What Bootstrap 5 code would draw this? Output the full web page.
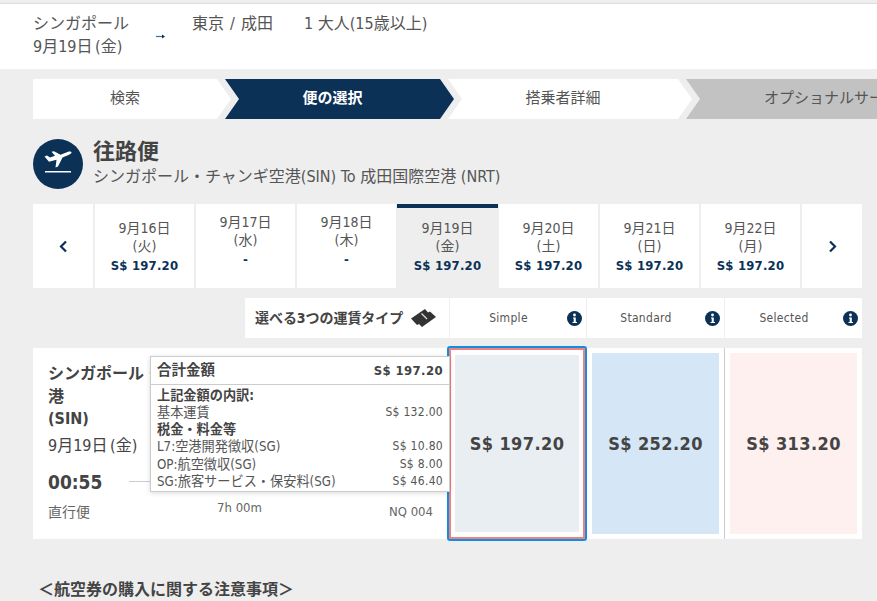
<!DOCTYPE html>
<html lang="ja">
<head>
<meta charset="utf-8">
<title>便の選択</title>
<link href="https://cdn.jsdelivr.net/npm/bootstrap@5.3.0/dist/css/bootstrap.min.css" rel="stylesheet">
<style>
html,body{height:601px;overflow:hidden}
body{background:#eee;color:#444;font-family:"DejaVu Sans Condensed","Noto Sans CJK JP",sans-serif;font-size:14px;width:877px}
.ff-top{height:66px;margin-top:3px;border-top:1px solid #ddd;background:#fff;padding:8px 0 0 33px;font-size:16px;color:#555;line-height:23px}
.ff-top-origin{width:122px;word-spacing:-2px}
.ff-top-arrow{width:37px;padding-top:12px;padding-left:1px}
.ff-top-dest{width:112px;word-spacing:1.500px}
.ff-clip{width:877px;overflow:hidden}
.ff-steps{margin:10px 0 0 33px;height:40px;width:850px}
.ff-step{height:40px;line-height:39px;background:#fff;text-align:center;font-size:15px;color:#555;flex:none;padding-right:14px}
.ff-s1{width:198px;clip-path:polygon(0 0,184px 0,198px 50%,184px 100%,0 100%)}
.ff-s2{width:229px;margin-left:-6px;background:#0b3157;color:#fff;font-weight:700;clip-path:polygon(0 0,215px 0,229px 50%,215px 100%,0 100%,14px 50%)}
.ff-s3{width:244px;margin-left:-6px;clip-path:polygon(0 0,230px 0,244px 50%,230px 100%,0 100%,14px 50%)}
.ff-s4{width:191px;margin-left:-6px;background:#c2c2c2;text-align:left;padding-left:78px;padding-right:0;white-space:nowrap;overflow:hidden;clip-path:polygon(0 0,100% 0,100% 100%,0 100%,14px 50%)}
.ff-head{margin:20px 0 0 33px;height:50px}
.ff-circle{width:50px;height:50px;border-radius:50%;background:#0b3157;flex:none;margin-right:10px}
.ff-title{font-size:22px;font-weight:700;line-height:26px;color:#444}
.ff-sub{font-size:16px;line-height:24px;color:#555}
.ff-dates{margin:15px 15px 0 33px;height:84px;gap:2px}
.ff-date{flex:0 0 99px;background:#fff;text-align:center;line-height:18px;color:#555;padding-top:15px}
.ff-date.ff-empty{padding-top:9px}
.ff-date.ff-active{flex:0 0 101px;margin:0 -1px;background:#eee;border-top:4px solid #0b3157;padding-top:11px}
.ff-nav{flex:0 0 60px;background:#fff}
.ff-price{color:#0b3157;font-weight:700;line-height:20px;margin-top:1px;letter-spacing:.2px;font-size:13px}
.ff-fares{margin:10px 15px 0 245px;height:40px;background:#fff}
.ff-fares-label{flex:0 0 204px;padding-left:10px;font-weight:700;font-size:14px;color:#444;white-space:nowrap;letter-spacing:-.05px}
.ff-fare-col{flex:0 0 138px;border-left:1px solid #eee;font-size:12px;color:#555;letter-spacing:.3px}
.ff-fare-first{flex:0 0 137px}
.ff-fare-col span{flex:1;text-align:center}
.ff-fare-col svg{margin-right:4px;flex:none}
.ff-flight{margin:10px 15px 0 33px;height:191px;background:#fff}
.ff-info{flex:0 0 414px;padding:15px 0 0 15px;position:relative}
.ff-name{width:200px;font-size:16px;font-weight:700;line-height:22.500px;color:#444}
.ff-when{font-size:16px;line-height:20px;margin-top:5px;color:#444;word-spacing:-2px}
.ff-time{font-size:19px;font-weight:700;line-height:26px;margin-top:13px;color:#444}
.ff-line{width:60px;height:1px;background:#ccc;margin:25px 0 0 27px}
.ff-meta{margin-top:7px;color:#666;font-size:14px;width:385px}
.ff-meta span:nth-child(2){margin-top:-4px;font-size:13px}
.ff-meta span:nth-child(3){font-size:13px}
.ff-sel{flex:0 0 140px;margin:-2px 0;border:2px solid #0d8fe8;border-radius:3px;position:relative;z-index:2;background:#fff}
.ff-sel-in{border:2px solid #f57f79;height:100%;padding:5px 4px}
.ff-box{height:100%;font-size:18px;font-weight:700;color:#444;letter-spacing:.4px}
.ff-box-a{background:#e9eef3}
.ff-box-b{background:#d5e6f6}
.ff-box-c{background:#fef0ef}
.ff-col{flex:0 0 137px;padding:5px}
.ff-col-last{flex:0 0 138px;border-left:1px solid #ccc}
.ff-tip{position:absolute;left:117px;top:8px;width:300px;height:136px;background:#fff;border:1px solid #ccc;box-shadow:0 1px 5px rgba(0,0,0,.15);z-index:3;font-size:13.200px;color:#555}
.ff-tip-top{height:28px;padding:1px 6px 0;border-bottom:1px solid #ccc;font-weight:700;color:#444;font-size:14.500px}
.ff-tip-top span:last-child{font-size:13px;letter-spacing:.4px}
.ff-tip-row{padding:0 6px;line-height:17.300px;white-space:nowrap}
.ff-tip-row span:last-child{font-size:12px;letter-spacing:.3px}
.ff-tip-head{color:#444;font-weight:700}
.ff-tip-rows{padding-top:1.500px}
.ff-notes{margin:39px 0 0 38px;font-size:16px;font-weight:700;color:#444;line-height:24px}
</style>
</head>
<body>
<div class="ff-top d-flex">
  <div class="ff-top-origin">シンガポール<br>9月19日 (金)</div>
  <div class="ff-top-arrow"><svg width="9" height="5" viewBox="0 0 9 5" aria-hidden="true"><path d="M0 2.500H6" stroke="#3a6ea5" stroke-width="1.200"/><path d="M6 .5 9 2.500 6 4.500Z" fill="#0b3157"/></svg></div>
  <div class="ff-top-dest">東京 / 成田</div>
  <div>1 大人(15歳以上)</div>
</div>

<div class="ff-clip">
<div class="ff-steps d-flex">
  <div class="ff-step ff-s1">検索</div>
  <div class="ff-step ff-s2">便の選択</div>
  <div class="ff-step ff-s3">搭乗者詳細</div>
  <div class="ff-step ff-s4">オプショナルサービス</div>
</div>
</div>

<div class="ff-head d-flex align-items-center">
  <div class="ff-circle d-flex align-items-center justify-content-center">
    <svg width="30" height="30" viewBox="0 0 30 30" aria-hidden="true"><path d="M1.500 7.500 4 6.500 7 8.500 12 6.800 8.500 2.800 11 2.300 17.500 5.800 24.500 3C26.800 2.200 28.500 2.700 28.500 3.600 28.500 4.400 27.500 5.200 25.500 6L19.500 8.500 15 17.500 12.500 18.500 13.500 10.800 6 12.800Z" fill="#fff"/><rect x="2" y="22" width="26" height="1.500" fill="#fff"/></svg>
  </div>
  <div>
    <div class="ff-title">往路便</div>
    <div class="ff-sub">シンガポール・チャンギ空港(SIN) To 成田国際空港 (NRT)</div>
  </div>
</div>

<div class="ff-dates d-flex">
  <div class="ff-nav d-flex align-items-center justify-content-center"><svg width="9" height="13" viewBox="0 0 9 13" aria-hidden="true"><path d="M7 1.500 2 6.500 7 11.500" fill="none" stroke="#0b3157" stroke-width="2.200"/></svg></div>
  <div class="ff-date">9月16日<br>(火)<div class="ff-price">S$ 197.20</div></div>
  <div class="ff-date ff-empty">9月17日<br>(水)<div class="ff-price">-</div></div>
  <div class="ff-date ff-empty">9月18日<br>(木)<div class="ff-price">-</div></div>
  <div class="ff-date ff-active">9月19日<br>(金)<div class="ff-price">S$ 197.20</div></div>
  <div class="ff-date">9月20日<br>(土)<div class="ff-price">S$ 197.20</div></div>
  <div class="ff-date">9月21日<br>(日)<div class="ff-price">S$ 197.20</div></div>
  <div class="ff-date">9月22日<br>(月)<div class="ff-price">S$ 197.20</div></div>
  <div class="ff-nav d-flex align-items-center justify-content-center"><svg width="9" height="13" viewBox="0 0 9 13" aria-hidden="true"><path d="M2 1.500 7 6.500 2 11.500" fill="none" stroke="#0b3157" stroke-width="2.200"/></svg></div>
</div>

<div class="ff-fares d-flex">
  <div class="ff-fares-label d-flex align-items-center">選べる3つの運賃タイプ
    <svg class="ms-2" width="25" height="18" viewBox="0 0 25 18" aria-hidden="true"><path d="M0 9.500 14 0 17 3.500 19 2.500 25 8 11 18 8 15 6 16Z" fill="#333"/><path d="M10.500 4.500 16 10" stroke="#ddd" stroke-width="1.200"/></svg>
  </div>
  <div class="ff-fare-col ff-fare-first d-flex align-items-center"><span>Simple</span><svg width="15" height="15" viewBox="0 0 15 15" aria-hidden="true"><circle cx="7.500" cy="7.500" r="7.500" fill="#0b3157"/><circle cx="7.500" cy="4" r="1.400" fill="#fff"/><path d="M6 6.500H8.800V11H10V12H5.500V11H6.700V7.500H6Z" fill="#fff"/></svg></div>
  <div class="ff-fare-col d-flex align-items-center"><span>Standard</span><svg width="15" height="15" viewBox="0 0 15 15" aria-hidden="true"><circle cx="7.500" cy="7.500" r="7.500" fill="#0b3157"/><circle cx="7.500" cy="4" r="1.400" fill="#fff"/><path d="M6 6.500H8.800V11H10V12H5.500V11H6.700V7.500H6Z" fill="#fff"/></svg></div>
  <div class="ff-fare-col d-flex align-items-center"><span>Selected</span><svg width="15" height="15" viewBox="0 0 15 15" aria-hidden="true"><circle cx="7.500" cy="7.500" r="7.500" fill="#0b3157"/><circle cx="7.500" cy="4" r="1.400" fill="#fff"/><path d="M6 6.500H8.800V11H10V12H5.500V11H6.700V7.500H6Z" fill="#fff"/></svg></div>
</div>

<div class="ff-flight d-flex">
  <div class="ff-info">
    <div class="ff-name">シンガポール・チャンギ空港<br>(SIN)</div>
    <div class="ff-when">9月19日 (金)</div>
    <div class="d-flex"><div class="ff-time">00:55</div><div class="ff-line"></div></div>
    <div class="ff-meta d-flex justify-content-between"><span>直行便</span><span>7h 00m</span><span>NQ 004</span></div>
    <div class="ff-tip">
      <div class="ff-tip-top d-flex justify-content-between align-items-center"><span>合計金額</span><span>S$ 197.20</span></div>
      <div class="ff-tip-rows">
        <div class="ff-tip-row ff-tip-head">上記金額の内訳:</div>
        <div class="ff-tip-row d-flex justify-content-between"><span>基本運賃</span><span>S$ 132.00</span></div>
        <div class="ff-tip-row ff-tip-head">税金・料金等</div>
        <div class="ff-tip-row d-flex justify-content-between"><span>L7:空港開発徴収(SG)</span><span>S$ 10.80</span></div>
        <div class="ff-tip-row d-flex justify-content-between"><span>OP:航空徴収(SG)</span><span>S$ 8.00</span></div>
        <div class="ff-tip-row d-flex justify-content-between"><span>SG:旅客サービス・保安料(SG)</span><span>S$ 46.40</span></div>
      </div>
    </div>
  </div>
  <div class="ff-sel"><div class="ff-sel-in"><div class="ff-box ff-box-a d-flex align-items-center justify-content-center">S$ 197.20</div></div></div>
  <div class="ff-col"><div class="ff-box ff-box-b d-flex align-items-center justify-content-center">S$ 252.20</div></div>
  <div class="ff-col ff-col-last"><div class="ff-box ff-box-c d-flex align-items-center justify-content-center">S$ 313.20</div></div>
</div>

<div class="ff-notes">＜航空券の購入に関する注意事項＞</div>
<script src="https://cdn.jsdelivr.net/npm/bootstrap@5.3.0/dist/js/bootstrap.bundle.min.js"></script>
</body>
</html>
